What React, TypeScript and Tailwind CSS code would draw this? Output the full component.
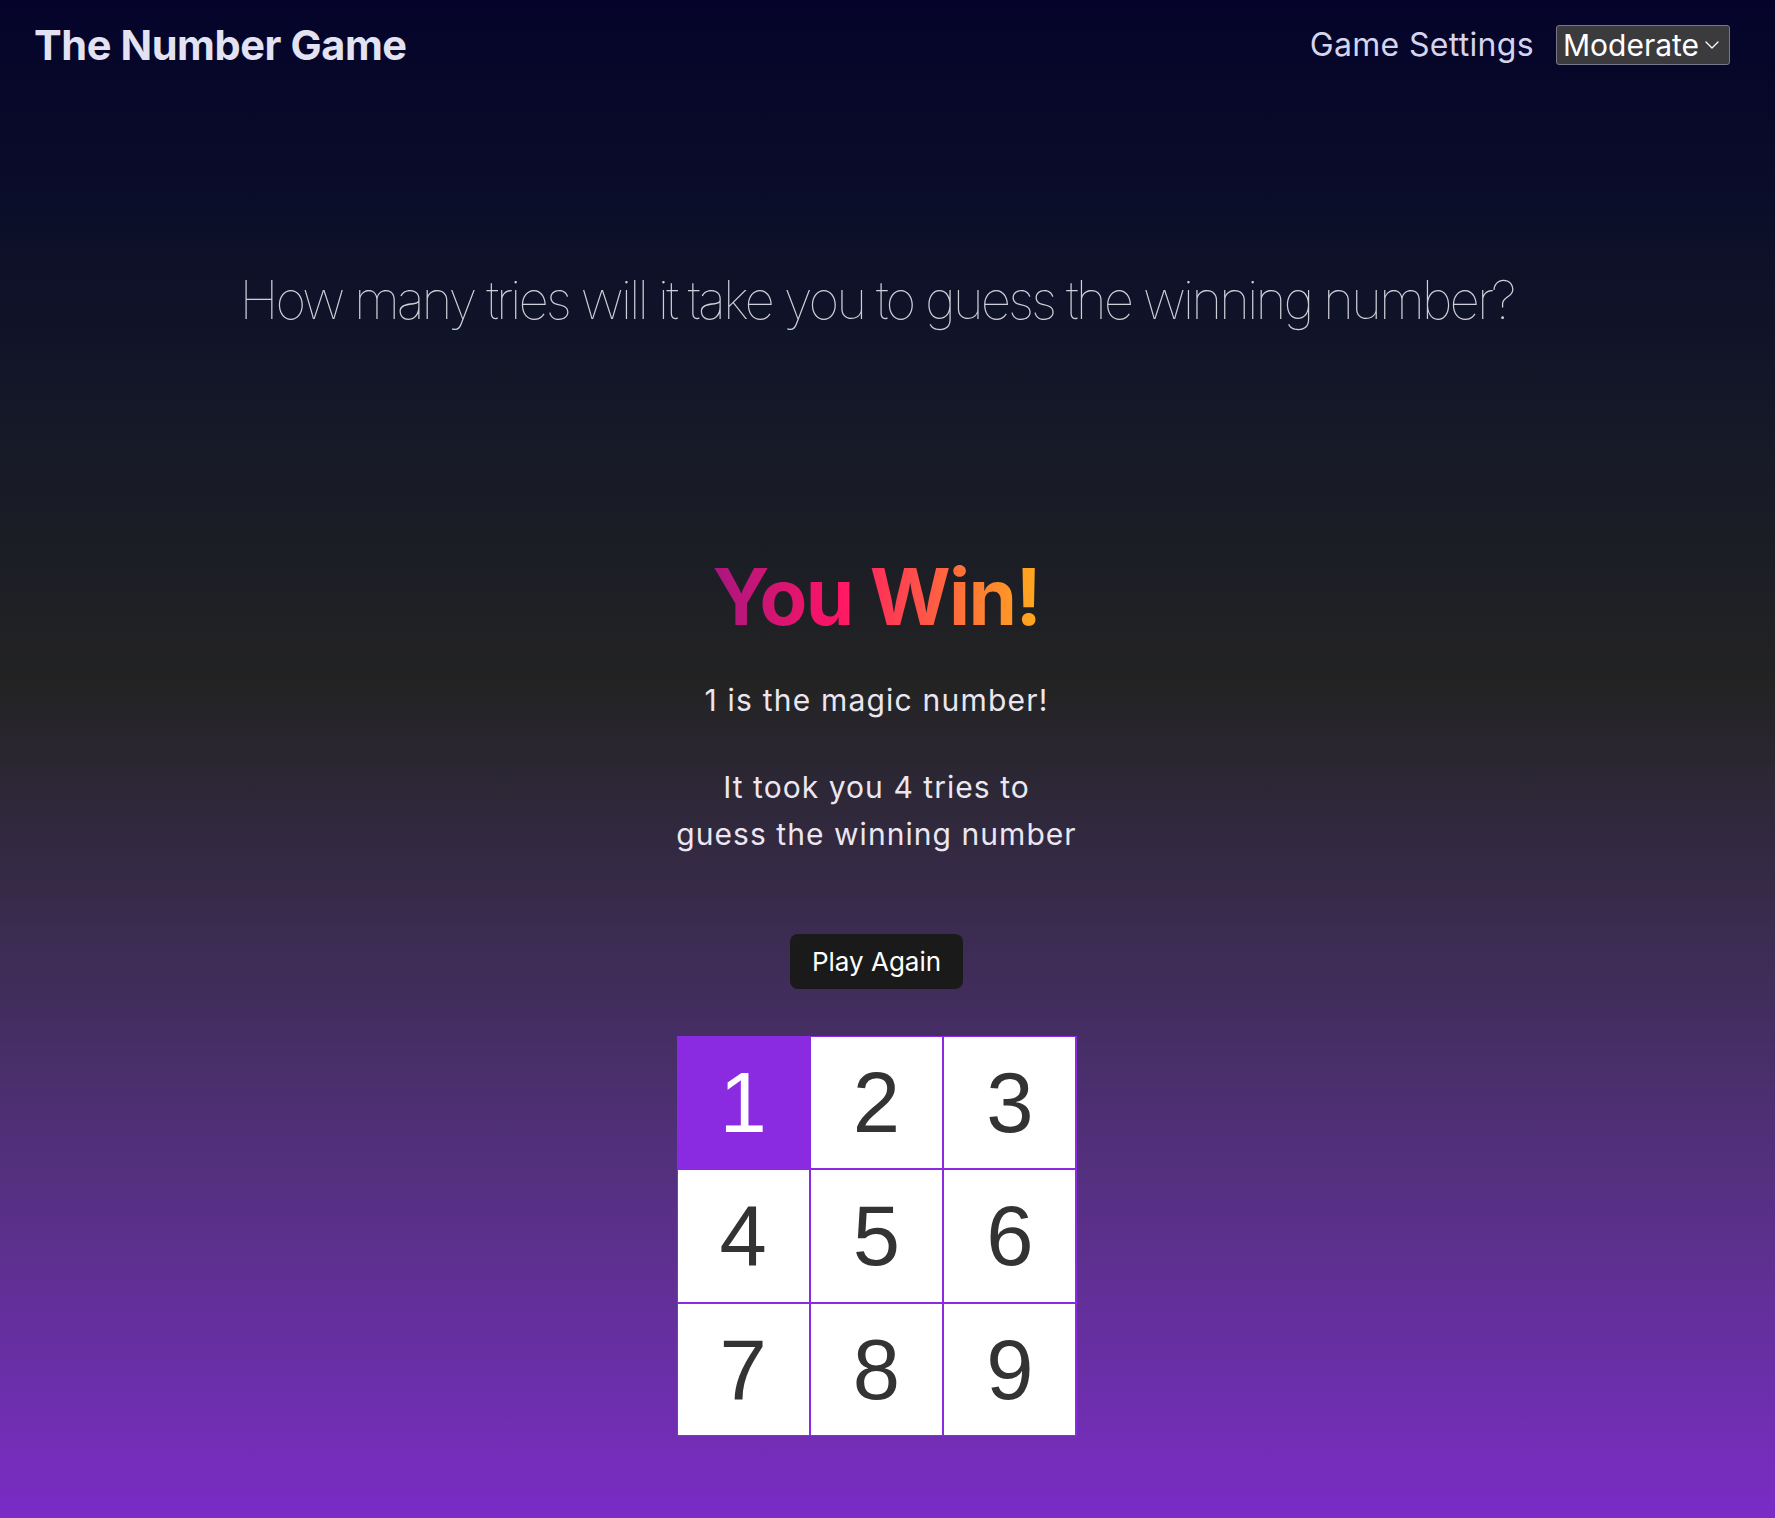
import { ChevronDown } from "lucide-react";

const cells = [1, 2, 3, 4, 5, 6, 7, 8, 9];

const App = () => {
  const winning = 1;

  return (
    <div className="min-h-screen bg-linear-to-b from-[#05032a] via-[#232323] via-45% to-[#7b2bc6] font-['Inter','Liberation_Sans',sans-serif]">
      <header className="flex items-center justify-between pl-[34px] pr-[45px] pt-[25px]">
        <h1 className="text-[41.5px] leading-[40px] font-bold text-[#e2e2f2] tracking-[-0.01em]">
          The Number Game
        </h1>
        <div className="flex items-center gap-[22px]">
          <span className="text-[32px] leading-none text-[#d4d4ec] tracking-[0.01em]">
            Game Settings
          </span>
          <div className="flex items-center h-[40px] w-[174px] pl-[6px] pr-[5px] bg-[#3b3b3d] border border-[#77778a] rounded-[3px] text-white">
            <span className="text-[30px] leading-none">Moderate</span>
            <ChevronDown className="ml-auto w-[24px] h-[24px]" strokeWidth={1.3} />
          </div>
        </div>
      </header>

      <main className="flex flex-col items-center pr-[22px] pb-[83px]">
        <p className="mt-[205px] text-[53px] leading-[60px] font-thin tracking-[-0.057em] text-[#cfcfd8]">
          How many tries will it take you to guess the winning number?
        </p>

        <h2 className="mt-[227px] text-[78px] leading-[80px] font-bold tracking-[-0.02em] bg-[linear-gradient(90deg,#a8167f_0%,#ff1466_38%,#ff4f4a_62%,#ffab1c_100%)] bg-clip-text text-transparent">
          You Win!
        </h2>

        <p className="mt-[40px] text-[30px] leading-[47px] tracking-[0.04em] text-[#ece6f0]">
          {winning} is the magic number!
        </p>
        <p className="mt-[40px] text-[30px] leading-[47px] tracking-[0.035em] text-[#ece6f0] text-center">
          It took you 4 tries to
          <br />
          guess the winning number
        </p>

        <button className="mt-[76px] h-[55px] px-[22px] rounded-[8px] bg-[#1a1a1a] text-white text-[26px] leading-none">
          Play Again
        </button>

        <div className="mt-[47px] grid grid-cols-3 gap-[2px] bg-[#8a2be2] border border-[#8a2be2] w-[400px] h-[400px]">
          {cells.map((n) => (
            <div
              key={n}
              className={
                n === winning
                  ? "flex items-center justify-center bg-[#8a2be2] text-white text-[85px] font-['Liberation_Sans',Arial,sans-serif]"
                  : "flex items-center justify-center bg-white text-[#333333] text-[85px] font-['Liberation_Sans',Arial,sans-serif]"
              }
            >
              {n}
            </div>
          ))}
        </div>
      </main>
    </div>
  );
};

export default App;
